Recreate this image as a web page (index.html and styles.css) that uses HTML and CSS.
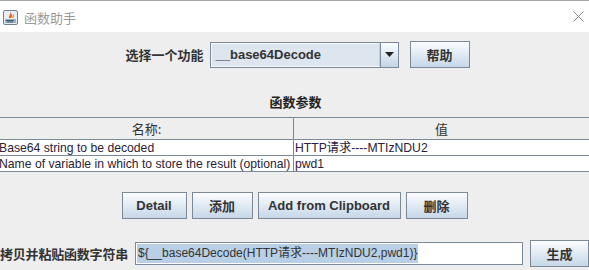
FILE: index.html
```html
<!DOCTYPE html>
<html>
<head>
<meta charset="utf-8">
<link rel="stylesheet" href="styles.css">
</head>
<body>
<div class="window">
  <div class="titlebar">
    <svg class="app-icon" width="15" height="15" viewBox="0 0 15 15">
      <rect x="0.5" y="0.5" width="14" height="14" rx="1.5" fill="#e8eef4" stroke="#6f8194"/>
      <rect x="2" y="9" width="11" height="4" fill="#9fb3c6"/>
      <path d="M3 10.5 H11 M4 12 H10" stroke="#44586c" stroke-width="1"/>
      <path d="M6 8 C5 6 8 5 7 2 C9 4 10 6 8 8 Z" fill="#e5641c"/>
      <path d="M9 8 C9 6 11 5 10 3.5 C12 5 11.5 7 10.5 8 Z" fill="#f2a23a"/>
    </svg>
    <span class="title">函数助手</span>
    <svg class="close" width="11" height="11" viewBox="0 0 11 11">
      <path d="M0.5 0.5 L10.5 10.5 M10.5 0.5 L0.5 10.5" stroke="#8a8a8a" stroke-width="1"/>
    </svg>
  </div>
  <div class="content">
    <div class="select-row">
      <span class="label">选择一个功能</span>
      <div class="combo">
        <div class="combo-field">__base64Decode</div>
        <div class="combo-arrow"><svg width="9" height="5" viewBox="0 0 9 5"><path d="M0 0 H9 L4.5 5 Z" fill="#222"/></svg></div>
      </div>
      <button class="btn help">帮助</button>
    </div>
    <div class="heading">函数参数</div>
    <table class="params">
      <thead>
        <tr><th class="c1">名称:</th><th>值</th></tr>
      </thead>
      <tbody>
        <tr><td class="c1">Base64 string to be decoded</td><td>HTTP请求----MTIzNDU2</td></tr>
        <tr><td class="c1">Name of variable in which to store the result (optional)</td><td>pwd1</td></tr>
      </tbody>
    </table>
    <div class="btn-row">
      <button class="btn b-detail">Detail</button>
      <button class="btn b-add">添加</button>
      <button class="btn b-clip">Add from Clipboard</button>
      <button class="btn b-del">删除</button>
    </div>
    <div class="gen-row">
      <span class="label gen-label">拷贝并粘贴函数字符串</span>
      <div class="gen-field"><span class="sel">${__base64Decode(HTTP请求----MTIzNDU2,pwd1)}</span></div>
      <button class="btn gen">生成</button>
    </div>
  </div>
</div>
</body>
</html>
```
FILE: styles.css
```css
* { box-sizing: border-box; }
html, body { margin: 0; padding: 0; }
body {
  width: 589px;
  height: 270px;
  overflow: hidden;
  background: #eeeeee;
  font-family: "Liberation Sans", "Noto Sans CJK SC", sans-serif;
  color: #222;
}
.window { width: 589px; height: 270px; }
.titlebar {
  height: 32px;
  background: #ffffff;
  border-top: 1px solid #a8a8a8;
  display: flex;
  align-items: center;
  padding-left: 3px;
  padding-right: 5px;
}
.app-icon { display: block; margin-top: 1px; }
.title {
  margin-left: 6px;
  font-family: "Noto Sans CJK SC", sans-serif;
  font-size: 13px;
  color: #9a9a9a;
  margin-top: 1px;
}
.close { margin-left: auto; margin-right: 0px; }
.content { display: flex; flex-direction: column; }
.label {
  font-family: "Noto Sans CJK SC", sans-serif;
  font-weight: 700;
  font-size: 13px;
  color: #333;
}
.select-row {
  margin-top: 9px;
  display: flex;
  align-items: center;
  justify-content: center;
  padding-left: 6px;
  height: 27px;
}
.combo {
  margin-left: 6px;
  display: flex;
  height: 26px;
  width: 189px;
  border: 1px solid #7a8a99;
  background: #dde6ef;
}
.combo-field {
  flex: 1;
  border: 1px solid #f4f7fa;
  border-right: 1px solid #c3cfdb;
  padding-left: 4px;
  font-weight: 700;
  font-size: 13px;
  line-height: 22px;
  color: #333;
}
.combo-arrow {
  width: 18px;
  display: flex;
  align-items: center;
  justify-content: center;
  border-left: 1px solid #7a8a99;
  background: linear-gradient(#fbfdff, #dce7f2 55%, #c3d5e7);
}
.btn {
  height: 27px;
  border: 1px solid #7a8a99;
  background: linear-gradient(#fcfdff, #e3ecf5 45%, #c6d7e8);
  font-family: "Liberation Sans", "Noto Sans CJK SC", sans-serif;
  font-weight: 700;
  font-size: 13px;
  color: #333;
  padding: 0;
  margin: 0;
}
.help { width: 60px; margin-left: 11px; }
.heading {
  margin-top: 26px;
  text-align: center;
  font-family: "Noto Sans CJK SC", sans-serif;
  font-weight: 700;
  font-size: 13px;
  line-height: 16px;
  color: #222;
  padding-left: 2px;
}
.params {
  margin-top: 7px;
  width: 591px;
  margin-left: -1px;
  border-collapse: collapse;
  font-size: 12px;
  table-layout: fixed;
}
.params th, .params td {
  border: 1px solid #7a8a99;
  padding: 0;
  white-space: nowrap;
  overflow: hidden;
}
.params th {
  background: #eeeeee;
  font-family: "Noto Sans CJK SC", sans-serif;
  font-weight: 400;
  font-size: 13px;
  height: 22px;
  color: #333;
}
.params .c1 { width: 294px; }
.params td {
  background: #ffffff;
  height: 16px;
  line-height: 14px;
  color: #2a2238;
  padding-left: 1px;
  font-size: 12.2px;
  font-family: "Liberation Sans", "Noto Sans CJK SC", sans-serif;
}
.params td.c1 { padding-left: 0; text-indent: -1px; }
.btn-row {
  margin-top: 20px;
  display: flex;
  justify-content: center;
  gap: 5px;
}
.b-detail { width: 65px; }
.b-add { width: 61px; font-family: "Noto Sans CJK SC", sans-serif; }
.b-clip { width: 143px; }
.b-del { width: 62px; font-family: "Noto Sans CJK SC", sans-serif; }
.gen-row {
  margin-top: 21px;
  display: flex;
  align-items: center;
}
.gen-label { width: 135px; flex: none; letter-spacing: -0.2px; }
.gen-field {
  width: 388px;
  height: 23px;
  flex: none;
  border: 1px solid #7a8a99;
  background: #ffffff;
  padding: 1px 1px;
  font-size: 12px;
  line-height: 19px;
  white-space: nowrap;
  overflow: hidden;
}
.sel { background: #b8cfe5; color: #333; padding: 0 1px; display: inline-block; }
.gen { width: 59px; margin-left: 7px; height: 27px; font-family: "Noto Sans CJK SC", sans-serif; }
```
